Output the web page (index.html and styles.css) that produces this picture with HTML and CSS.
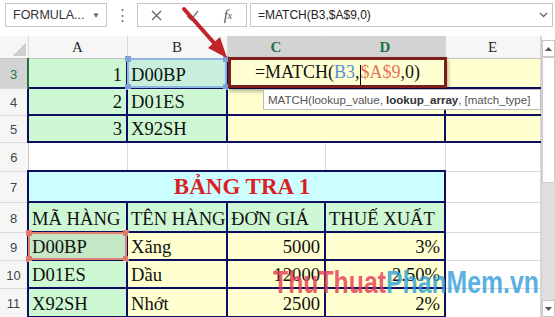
FILE: index.html
```html
<!DOCTYPE html>
<html lang="vi">
<head>
  <meta charset="UTF-8">
  <meta name="viewport" content="width=device-width, initial-scale=1.0">
  <title>MATCH</title>
  <link rel="stylesheet" href="styles.css">
</head>
<body>
  <div class="toolbar">
    <div class="namebox"><span>FORMULA...</span><span class="caret">&#9660;</span></div>
    <div class="dots">&#8942;</div>
    <div class="fxbox">
      <span><svg width="11" height="11" viewBox="0 0 11 11"><path d="M1 1L10 10M10 1L1 10" stroke="#666" stroke-width="1.3" fill="none"/></svg></span>
      <span><svg width="13" height="11" viewBox="0 0 13 11"><path d="M1 6L5 10L12 1" stroke="#777" stroke-width="1.3" fill="none"/></svg></span>
      <span class="fx">f<sub>x</sub></span>
    </div>
    <div class="formula">
      <span>=MATCH(B3,$A$9,0)</span>
      <svg width="9" height="6" viewBox="0 0 9 6"><path d="M1 1L4.5 4.5L8 1" stroke="#666" stroke-width="1.3" fill="none"/></svg>
    </div>
  </div>

  <div class="sheet">
    <table class="grid">
      <colgroup>
        <col class="c-hd"><col class="c-a"><col class="c-b"><col class="c-c"><col class="c-d"><col class="c-e">
      </colgroup>
      <thead>
        <tr class="r-hd">
          <th class="corner"></th>
          <th>A</th><th>B</th><th class="on">C</th><th class="on">D</th><th>E</th>
        </tr>
      </thead>
      <tbody>
        <tr class="r3">
          <th class="on">3</th>
          <td class="g nb num">1</td>
          <td class="g nb sel-b">
            <div class="ref blue"><i class="tl"></i><i class="tr"></i><i class="bl"></i><i class="br"></i></div>D00BP
          </td>
          <td class="y nb edit-cell" colspan="2">
            <div class="editor">=MATCH(<span class="rb">B3</span>,<span class="caretline"></span><span class="rr">$A$9</span>,0)</div>
          </td>
          <td class="y nb-l"></td>
        </tr>
        <tr class="r4">
          <th>4</th>
          <td class="g nb num">2</td>
          <td class="g nb">D01ES</td>
          <td class="y nb" colspan="2"></td>
          <td class="y nb-l"></td>
        </tr>
        <tr class="r5">
          <th>5</th>
          <td class="g nb num">3</td>
          <td class="g nb">X92SH</td>
          <td class="y nb" colspan="2"></td>
          <td class="y nb-l"></td>
        </tr>
        <tr class="r6">
          <th>6</th>
          <td></td><td></td><td></td><td></td><td></td>
        </tr>
        <tr class="r7">
          <th>7</th>
          <td class="c nb title" colspan="4">BẢNG TRA 1</td>
          <td></td>
        </tr>
        <tr class="r8">
          <th>8</th>
          <td class="g nb">MÃ HÀNG</td>
          <td class="g nb">TÊN HÀNG</td>
          <td class="g nb">ĐƠN GIÁ</td>
          <td class="g nb">THUẾ XUẤT</td>
          <td></td>
        </tr>
        <tr class="r9">
          <th>9</th>
          <td class="g nb sel-a">
            <div class="ref red"><i class="tl"></i><i class="tr"></i><i class="bl"></i><i class="br"></i></div>D00BP
          </td>
          <td class="y nb">Xăng</td>
          <td class="y nb num">5000</td>
          <td class="y nb num">3%</td>
          <td></td>
        </tr>
        <tr class="r10">
          <th>10</th>
          <td class="g nb">D01ES</td>
          <td class="y nb">Dầu</td>
          <td class="y nb num">12000</td>
          <td class="y nb num">2.50%</td>
          <td></td>
        </tr>
        <tr class="r11">
          <th>11</th>
          <td class="g nb">X92SH</td>
          <td class="y nb">Nhớt</td>
          <td class="y nb num">2500</td>
          <td class="y nb num">2%</td>
          <td></td>
        </tr>
      </tbody>
    </table>

    <div class="vscroll">
      <div class="sbtn"><svg width="7" height="4" viewBox="0 0 7 4"><path d="M0 4L3.5 0L7 4Z" fill="#555"/></svg></div>
      <div class="thumb"></div>
      <div class="track"></div>
      <div class="sbtn"><svg width="7" height="4" viewBox="0 0 7 4"><path d="M0 0L3.5 4L7 0Z" fill="#555"/></svg></div>
    </div>
  </div>

  <div class="tip">MATCH(lookup_value, <b>lookup_array</b>, [match_type]</div>

  <svg class="arrow" width="52" height="58" viewBox="0 0 52 58">
    <path d="M4 5L35 40" stroke="#bf252b" stroke-width="4" stroke-linecap="round"/>
    <path d="M47 54L28 44L40 33Z" fill="#bf252b"/>
  </svg>

  <div class="mark"><span class="m1">ThuThuat</span><span class="m2">PhanMem.vn</span></div>
</body>
</html>
```

FILE: styles.css
```css
*, *::before, *::after {
  margin: 0;
  padding: 0;
  box-sizing: border-box;
}

body {
  width: 555px;
  height: 317px;
  overflow: hidden;
  position: relative;
  background: #fff;
  font-family: "Liberation Sans", Arial, sans-serif;
}

/* formula bar */
.toolbar {
  height: 36px;
  display: flex;
  align-items: flex-start;
  padding: 3px 0 0 5px;
}

.namebox {
  width: 102px;
  height: 24px;
  border: 1px solid #c6c6c6;
  display: flex;
  align-items: center;
  justify-content: space-between;
  padding: 0 6px 0 7px;
  font-size: 12.5px;
  color: #333;
}

.namebox .caret {
  font-size: 8px;
  color: #666;
}

.dots {
  width: 30px;
  text-align: center;
  color: #777;
  font-size: 15px;
  line-height: 24px;
}

.fxbox {
  width: 110px;
  height: 24px;
  border: 1px solid #c6c6c6;
  display: flex;
}

.fxbox span {
  width: 36px;
  display: flex;
  align-items: center;
  justify-content: center;
}

.fxbox .fx {
  font-family: "Liberation Serif", serif;
  font-style: italic;
  font-size: 15px;
  color: #555;
}

.fxbox .fx sub {
  font-size: 10px;
  vertical-align: -2px;
}

.formula {
  margin-left: 3px;
  width: 303px;
  height: 24px;
  border: 1px solid #c6c6c6;
  display: flex;
  align-items: center;
  justify-content: space-between;
  padding: 0 4px 0 7px;
  font-size: 12px;
  color: #222;
}

/* sheet */
.sheet {
  display: flex;
  align-items: flex-start;
}

.grid {
  width: 540px;
  table-layout: fixed;
  border-collapse: collapse;
  font-family: "Liberation Serif", "Times New Roman", serif;
  font-size: 18.6px;
  color: #111;
}

.c-hd { width: 28px; }
.c-a { width: 99px; }
.c-b { width: 100px; }
.c-c { width: 98px; }
.c-d { width: 120px; }
.c-e { width: 95px; }

.r-hd { height: 22px; }
.r3 { height: 30px; }
.r4 { height: 27px; }
.r5 { height: 27px; }
.r6 { height: 29px; }
.r7 { height: 31px; }
.r8 { height: 30px; }
.r9 { height: 28px; }
.r10 { height: 28px; }
.r11 { height: 29px; }

.grid thead th {
  background: #f6f6f6;
  border-right: 1px solid #d8d8d8;
  border-bottom: 1px solid #c4c4c4;
  font-weight: normal;
  font-size: 15px;
  color: #262626;
  padding-top: 2px;
}

.grid thead th.on {
  background: #d3d3d3;
  color: #217346;
  font-weight: bold;
}

.grid thead th.corner {
  background: #f6f6f6 linear-gradient(135deg, transparent 50%, #cfcfcf 50%) no-repeat right 2px bottom 2px / 14px 14px;
}

.grid tbody th {
  background: #f6f6f6;
  border-right: 1px solid #c4c4c4;
  border-bottom: 1px solid #dadada;
  font-family: "Liberation Sans", Arial, sans-serif;
  font-weight: normal;
  font-size: 13px;
  color: #444;
  padding-top: 2px;
}

.grid tbody th.on {
  background: #d3d3d3;
  color: #217346;
  border-right: 2px solid #217346;
}

.grid td {
  border: 1px solid #dadada;
  padding: 0 3px 1px;
  vertical-align: bottom;
  white-space: nowrap;
  position: relative;
}

.grid td.num { text-align: right; padding-right: 4px; }

.g { background: #cdf8d3; }
.y { background: #ffffcf; }
.c { background: #ccffff; }

.grid td.nb { border: 2px solid #0d0d62; }
.grid td.nb-l { border-bottom: 2px solid #0d0d62; border-left: 2px solid #0d0d62; }
.grid .r3 td { border-top: 1px solid #c4c4c4; }

.grid td.title {
  text-align: center;
  padding-left: 14px;
  font-weight: bold;
  font-size: 23px;
  color: #dc1f26;
}

/* reference highlights */
.ref {
  position: absolute;
  inset: -1px;
  border: 2px solid;
}

.ref i {
  position: absolute;
  width: 6px;
  height: 6px;
}

.ref .tl { left: -4px; top: -4px; }
.ref .tr { right: -4px; top: -4px; }
.ref .bl { left: -4px; bottom: -4px; }
.ref .br { right: -4px; bottom: -4px; }

.ref.blue { border-color: #8fb5e4; }
.ref.blue i { background: #7fa3d8; }
.ref.red { border-color: #e2816f; }
.ref.red i { background: #de7a6c; }

.sel-b { background: #c8efdb; }
.sel-a { background: #c5e8c6; }

/* cell in edit mode */
.editor {
  position: absolute;
  top: -2px;
  left: 0;
  right: -3px;
  bottom: -1px;
  border: 3px solid #7f1d1d;
  background: #ffffd2;
  box-shadow: 1px 3px 4px rgba(0, 0, 0, 0.35);
  display: flex;
  align-items: center;
  justify-content: center;
  padding-top: 1px;
  font-size: 18px;
  color: #111;
  z-index: 2;
}

.editor .rb { color: #5a8ed4; }
.editor .rr { color: #e5735a; }

.caretline {
  display: inline-block;
  width: 1px;
  height: 20px;
  background: #000;
  margin: 0 0 -4px;
}

/* vertical scrollbar */
.vscroll {
  width: 15px;
  height: 281px;
  display: flex;
  flex-direction: column;
  padding-top: 4px;
  border-left: 1px solid #d0d0d0;
  background: #fff;
}

.sbtn {
  height: 17px;
  border: 1px solid #c8c8c8;
  display: flex;
  align-items: center;
  justify-content: center;
  background: #fff;
}

.thumb {
  height: 126px;
  border: 1px solid #cdcdcd;
  background: #fff;
}

.track {
  flex: 1;
  background: #dedede;
}

/* function tooltip */
.tip {
  position: absolute;
  left: 263px;
  top: 89px;
  width: 278px;
  height: 21px;
  overflow: hidden;
  white-space: nowrap;
  background: #fff;
  border: 1px solid #bdbdbd;
  padding: 0 3px 0 4px;
  font-size: 11.6px;
  letter-spacing: -0.05px;
  line-height: 19px;
  color: #555;
  z-index: 3;
}

.tip b { color: #333; }

.arrow {
  position: absolute;
  left: 180px;
  top: 4px;
  z-index: 4;
}

.mark {
  position: absolute;
  left: 273px;
  top: 267px;
  font-size: 31px;
  line-height: 31px;
  font-weight: bold;
  white-space: nowrap;
  transform: scaleX(0.8);
  transform-origin: left;
  z-index: 5;
}

.m1 { color: rgba(228, 60, 88, 0.82); }
.m2 { color: rgba(44, 156, 218, 0.8); }
```
